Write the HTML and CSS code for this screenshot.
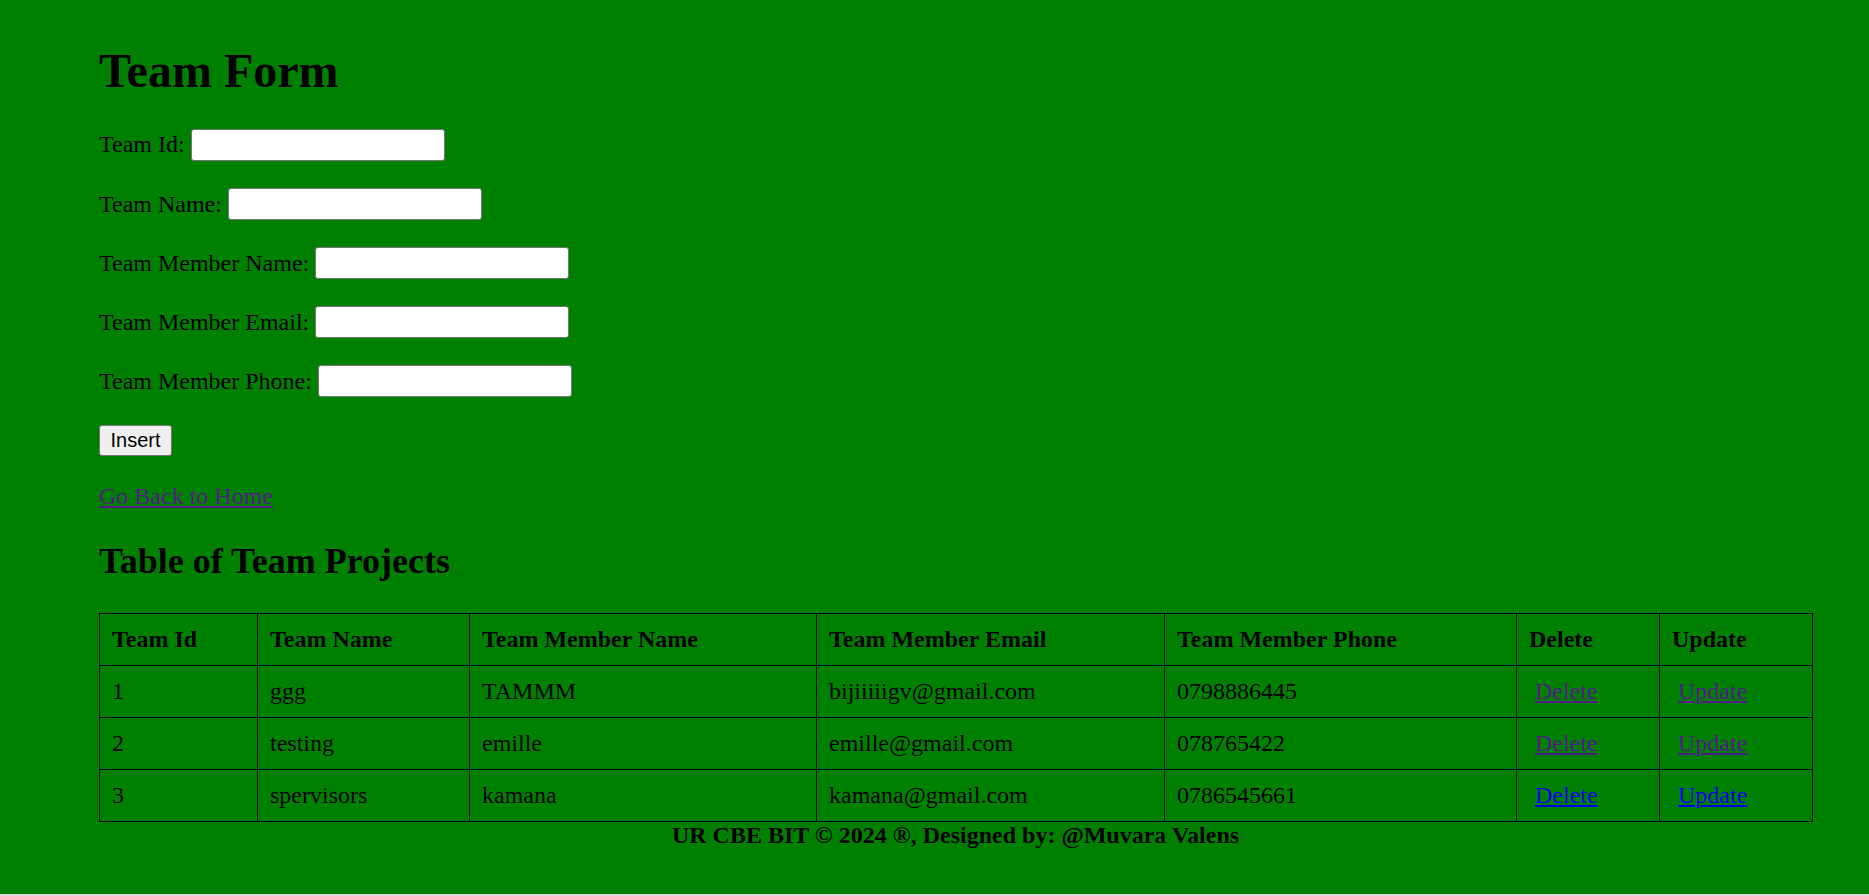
FILE: index.html
```html
<!DOCTYPE html>
<html lang="en">
<head>
<meta charset="utf-8">
<title>Team Form</title>
<link rel="stylesheet" href="styles.css">
</head>
<body>
<div class="page">
  <h1 class="title">Team Form</h1>
  <form class="team-form">
    <div class="row"><label>Team Id:</label><input type="text" class="field"></div>
    <div class="row"><label>Team Name:</label><input type="text" class="field"></div>
    <div class="row"><label>Team Member Name:</label><input type="text" class="field"></div>
    <div class="row"><label>Team Member Email:</label><input type="text" class="field"></div>
    <div class="row"><label>Team Member Phone:</label><input type="text" class="field"></div>
    <div class="row"><button type="button" class="btn">Insert</button></div>
  </form>
  <p class="home"><a href="#" class="link visited">Go Back to Home</a></p>
  <h2 class="subtitle">Table of Team Projects</h2>
  <table class="grid">
    <colgroup>
      <col class="c1"><col class="c2"><col class="c3"><col class="c4"><col class="c5"><col class="c6"><col class="c7">
    </colgroup>
    <thead>
      <tr><th>Team Id</th><th>Team Name</th><th>Team Member Name</th><th>Team Member Email</th><th>Team Member Phone</th><th>Delete</th><th>Update</th></tr>
    </thead>
    <tbody>
      <tr><td>1</td><td>ggg</td><td>TAMMM</td><td>bijiiiiigv@gmail.com</td><td>0798886445</td><td><a href="#" class="act visited">Delete</a></td><td><a href="#" class="act visited">Update</a></td></tr>
      <tr><td>2</td><td>testing</td><td>emille</td><td>emille@gmail.com</td><td>078765422</td><td><a href="#" class="act visited">Delete</a></td><td><a href="#" class="act visited">Update</a></td></tr>
      <tr><td>3</td><td>spervisors</td><td>kamana</td><td>kamana@gmail.com</td><td>0786545661</td><td><a href="#" class="act fresh">Delete</a></td><td><a href="#" class="act fresh">Update</a></td></tr>
    </tbody>
  </table>
  <footer class="foot">UR CBE BIT © 2024 ®, Designed by: @Muvara Valens</footer>
</div>
</body>
</html>
```

FILE: styles.css
```css
html {
  background: #dadada;
}
body {
  margin: 0;
  font-family: "Liberation Serif", "Times New Roman", serif;
  color: #000;
}
.page {
  background: #008000;
  height: 894px;
  box-sizing: border-box;
  padding: 0 57px 0 99px;
  display: flow-root;
  overflow: hidden;
}
.title {
  margin: 43px 0 0;
  font-size: 48px;
  line-height: 55px;
  font-weight: bold;
}
.team-form {
  margin-top: 31px;
  display: flex;
  flex-direction: column;
  gap: 27.6px;
}
.row {
  display: flex;
  align-items: center;
  gap: 6px;
  height: 31.5px;
  font-size: 24px;
}
.row label {
  line-height: 27.6px;
  position: relative;
  top: 0.5px;
}
.field {
  box-sizing: border-box;
  width: 254px;
  height: 31.5px;
  margin: 0;
  padding: 2px 3px;
  background: #fff;
  border: 1px solid #767676;
  border-radius: 3px;
  font-family: "Liberation Sans", Arial, sans-serif;
  font-size: 20px;
}
.btn {
  box-sizing: border-box;
  width: 73px;
  height: 31px;
  margin: 0;
  padding: 0 10px;
  background: #efefef;
  border: 1px solid #767676;
  border-radius: 3px;
  font-family: "Liberation Sans", Arial, sans-serif;
  font-size: 20px;
  color: #000;
}
.home {
  margin: 27px 0 0;
  font-size: 24px;
  line-height: 27.6px;
}
.link.visited, .act.visited {
  color: #551a8b;
}
.act.fresh {
  color: #0000ee;
}
.subtitle {
  margin: 30px 0 0;
  font-size: 36px;
  line-height: 41.4px;
  font-weight: bold;
}
.grid {
  margin-top: 31px;
  width: 100%;
  border-collapse: collapse;
  table-layout: fixed;
  font-size: 24px;
}
.c1 { width: 158px; }
.c2 { width: 212px; }
.c3 { width: 347px; }
.c4 { width: 348px; }
.c5 { width: 352px; }
.c6 { width: 143px; }
.c7 { width: 153px; }
.grid th, .grid td {
  border: 1px solid #000;
  padding: 12px;
  line-height: 27px;
  text-align: left;
  white-space: nowrap;
}
.grid th {
  font-weight: bold;
}
.act {
  margin-left: 6px;
}
.foot {
  text-align: center;
  font-weight: bold;
  font-size: 24px;
  line-height: 27.6px;
}
```
